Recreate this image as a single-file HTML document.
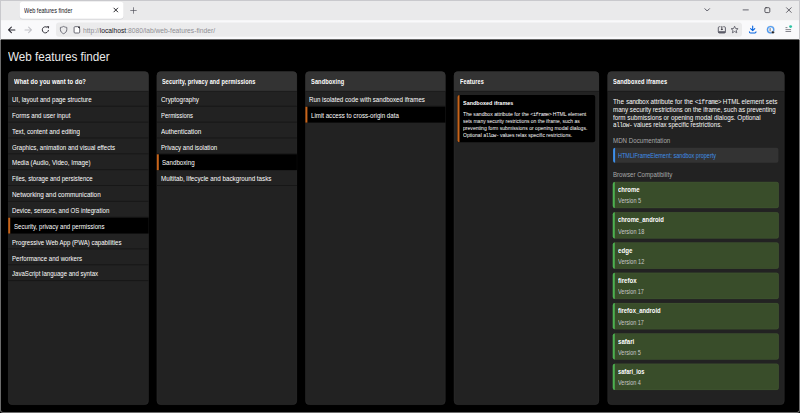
<!DOCTYPE html>
<html><head><meta charset="utf-8"><style>
*{box-sizing:border-box;margin:0;padding:0}
html,body{width:800px;height:413px;overflow:hidden;background:#000;font-family:"Liberation Sans",sans-serif}
.t{position:absolute;white-space:nowrap;line-height:1;transform-origin:0 0}
.bm{display:inline-block;width:0;height:0;vertical-align:baseline}
.m{font-family:"Liberation Mono",monospace;font-size:1em;letter-spacing:-0.55px}
#frame{position:absolute;left:0;top:0;width:800px;height:413px;border:1px solid #6c6c6c;border-top-color:#c9c9cd;border-radius:0 0 3px 3px;pointer-events:none}
#lb{position:absolute;left:0;top:0;width:1px;height:40px;background:#c9c9cd}
#rb{position:absolute;right:0;top:0;width:1px;height:40px;background:#c9c9cd}

</style></head><body>
<svg id="chrome" width="800" height="40" viewBox="0 0 800 40" style="position:absolute;left:0;top:0">
<rect x="0" y="0" width="800" height="21" fill="#eaeaeb"/>
<rect x="0" y="0" width="800" height="1" fill="#c9c9cd"/>
<rect x="19.7" y="2.4" width="103.8" height="17.1" rx="3.2" fill="#d2d2d6"/>
<rect x="19.7" y="1.8" width="103.8" height="16.9" rx="3.2" fill="#fff"/>
<rect x="0" y="20.2" width="800" height="19.2" fill="#f9f9fb"/>
<rect x="56" y="22.4" width="686" height="14.4" rx="3.2" fill="#ebebec"/>
<g fill="none" stroke="#15141a" stroke-width="0.9" stroke-linecap="round">
 <path d="M113.9 8.1L117.7 11.9M117.7 8.1L113.9 11.9"/>
</g>
<g fill="none" stroke-linecap="round">
 <path d="M133.5 7.7V13.3M130.7 10.5H136.3" stroke="#4a4a55" stroke-width="0.65"/>
 <path d="M743.1 9.9H748.3" stroke="#3a3a44" stroke-width="0.75"/>
 <rect x="764.9" y="7.7" width="4.9" height="4.9" rx="1.1" stroke="#2b2a33" stroke-width="0.75"/>
 <path d="M786.5 7.7L791.2 12.4M791.2 7.7L786.5 12.4" stroke="#2b2a33" stroke-width="0.7"/>
</g>
<path d="M704.9 8.7L707.2 11L709.5 8.7" fill="none" stroke="#5b5b66" stroke-width="1" stroke-linecap="round" stroke-linejoin="round"/>
<g fill="none" stroke-width="1.05" stroke-linecap="round" stroke-linejoin="round">
 <path d="M14.9 29.9H8.6M11.4 27.1L8.5 29.9L11.4 32.7" stroke="#2b2a33"/>
 <path d="M25 29.9H31.4M28.6 27.1L31.5 29.9L28.6 32.7" stroke="#c2c2c8"/>
 <path d="M48.45 30.34A3.1 3.1 0 1 1 46.95 27.12" stroke="#2b2a33" stroke-width="0.95"/>
</g>
<path d="M46.6 26.3L49.1 26.2L48.9 28.7Z" fill="#2b2a33"/>
<path d="M63.6 26.4C62.1 27.2 60.8 27.4 60.4 27.4V29.6C60.4 31.7 62 33.1 63.6 33.7C65.2 33.1 66.8 31.7 66.8 29.6V27.4C66.4 27.4 65.1 27.2 63.6 26.4Z" fill="none" stroke="#5b5b66" stroke-width="0.85"/>
<path d="M74.1 27.6Q74.1 26.7 75 26.7H77.7L79.7 28.7V32.1Q79.7 33 78.8 33H75Q74.1 33 74.1 32.1Z" fill="#fff" stroke="#5b5b66" stroke-width="0.9"/>
<path d="M77.6 26.6L79.8 28.8L79.8 26.6Z" fill="#15141a"/>
<path d="M720.4 26.7H719.4Q718.3 26.7 718.3 27.8V31.9Q718.3 33 719.4 33H724.3Q725.4 33 725.4 31.9V27.8Q725.4 26.7 724.3 26.7H723.3" fill="none" stroke="#5b5b66" stroke-width="0.95"/>
<rect x="718.3" y="31.2" width="7.1" height="1.8" fill="#5b5b66"/>
<path d="M721.85 26.2V29.6" stroke="#2b2a33" stroke-width="0.9"/>
<path d="M720.6 28.9L721.85 30.3L723.1 28.9Z" fill="#2b2a33"/>
<path d="M734.6 26.2L735.6 28.5L738.1 28.7L736.2 30.3L736.8 32.8L734.6 31.5L732.4 32.8L733 30.3L731.1 28.7L733.6 28.5Z" fill="none" stroke="#5b5b66" stroke-width="0.85" stroke-linejoin="round"/>
<path d="M752.7 26.1V30.6M750.6 28.6L752.7 30.7L754.8 28.6M749.4 31.8Q749.4 32.9 750.5 32.9H754.9Q756 32.9 756 31.8" fill="none" stroke="#0061e0" stroke-width="1.05" stroke-linecap="round" stroke-linejoin="round"/>
<circle cx="770.6" cy="29.7" r="3.9" fill="none" stroke="#c8c0b8" stroke-width="0.4"/>
<circle cx="770.6" cy="29.7" r="3.1" fill="none" stroke="#4d9af2" stroke-width="1.3"/>
<path d="M770.1 28.1V31.3" stroke="#4a4a55" stroke-width="0.8"/>
<circle cx="772.9" cy="32.3" r="1.35" fill="#15141a" stroke="#f9f9fb" stroke-width="0.4"/>
<path d="M785.5 27.6H787.4M785.5 29.6H791.1M785.5 31.5H791.1" stroke="#55555f" stroke-width="0.7"/>
<circle cx="790.6" cy="26.6" r="1.45" fill="#2ac3a2"/>
</svg>
<svg id="deco" width="800" height="413" viewBox="0 0 800 413" style="position:absolute;left:0;top:0">
<rect x="8.2" y="71.6" width="140.4" height="333.20000000000005" rx="4" fill="#222"/>
<rect x="8.45" y="71.85" width="139.90" height="332.70" rx="3.75" fill="none" stroke="#2c2c2c" stroke-width="0.5"/>
<rect x="8.2" y="105.75" width="140.4" height="1" fill="#171717"/>
<rect x="8.2" y="121.60" width="140.4" height="1" fill="#171717"/>
<rect x="8.2" y="137.45" width="140.4" height="1" fill="#171717"/>
<rect x="8.2" y="153.30" width="140.4" height="1" fill="#171717"/>
<rect x="8.2" y="169.15" width="140.4" height="1" fill="#171717"/>
<rect x="8.2" y="185.00" width="140.4" height="1" fill="#171717"/>
<rect x="8.2" y="200.85" width="140.4" height="1" fill="#171717"/>
<rect x="8.2" y="216.70" width="140.4" height="1" fill="#171717"/>
<rect x="8.2" y="217.70" width="140.4" height="15.85" fill="#000"/>
<rect x="8.2" y="217.70" width="2" height="15.85" fill="#c8641a"/>
<rect x="8.2" y="248.40" width="140.4" height="1" fill="#171717"/>
<rect x="8.2" y="264.25" width="140.4" height="1" fill="#171717"/>
<rect x="8.2" y="280.10" width="140.4" height="1" fill="#171717"/>
<path d="M8.2 90.89999999999999V75.6Q8.2 71.6 12.2 71.6H144.60Q148.60 71.6 148.60 75.6V90.90Z" fill="#333"/>
<rect x="8.2" y="90.90" width="140.4" height="0.9" fill="#1c1c1c"/>
<rect x="156.8" y="71.6" width="140.1" height="333.20000000000005" rx="4" fill="#222"/>
<rect x="157.05" y="71.85" width="139.60" height="332.70" rx="3.75" fill="none" stroke="#2c2c2c" stroke-width="0.5"/>
<rect x="156.8" y="105.75" width="140.1" height="1" fill="#171717"/>
<rect x="156.8" y="121.60" width="140.1" height="1" fill="#171717"/>
<rect x="156.8" y="137.45" width="140.1" height="1" fill="#171717"/>
<rect x="156.8" y="153.30" width="140.1" height="1" fill="#171717"/>
<rect x="156.8" y="154.30" width="140.1" height="15.85" fill="#000"/>
<rect x="156.8" y="154.30" width="2" height="15.85" fill="#c8641a"/>
<rect x="156.8" y="185.00" width="140.1" height="1" fill="#171717"/>
<path d="M156.8 90.89999999999999V75.6Q156.8 71.6 160.8 71.6H292.90Q296.90 71.6 296.90 75.6V90.90Z" fill="#333"/>
<rect x="156.8" y="90.90" width="140.1" height="0.9" fill="#1c1c1c"/>
<rect x="305.4" y="71.6" width="140" height="333.20000000000005" rx="4" fill="#222"/>
<rect x="305.65" y="71.85" width="139.50" height="332.70" rx="3.75" fill="none" stroke="#2c2c2c" stroke-width="0.5"/>
<rect x="305.4" y="105.75" width="140" height="1" fill="#171717"/>
<rect x="305.4" y="106.75" width="140" height="15.85" fill="#000"/>
<rect x="305.4" y="106.75" width="2" height="15.85" fill="#c8641a"/>
<path d="M305.4 90.89999999999999V75.6Q305.4 71.6 309.4 71.6H441.40Q445.40 71.6 445.40 75.6V90.90Z" fill="#333"/>
<rect x="305.4" y="90.90" width="140" height="0.9" fill="#1c1c1c"/>
<rect x="453.9" y="71.6" width="145.1" height="333.20000000000005" rx="4" fill="#222"/>
<rect x="454.15" y="71.85" width="144.60" height="332.70" rx="3.75" fill="none" stroke="#2c2c2c" stroke-width="0.5"/>
<path d="M453.9 90.89999999999999V75.6Q453.9 71.6 457.9 71.6H595.00Q599.00 71.6 599.00 75.6V90.90Z" fill="#333"/>
<rect x="453.9" y="90.90" width="145.1" height="0.9" fill="#1c1c1c"/>
<rect x="607.6" y="71.6" width="176.8" height="333.20000000000005" rx="4" fill="#222"/>
<rect x="607.85" y="71.85" width="176.30" height="332.70" rx="3.75" fill="none" stroke="#2c2c2c" stroke-width="0.5"/>
<path d="M607.6 90.89999999999999V75.6Q607.6 71.6 611.6 71.6H780.40Q784.40 71.6 784.40 75.6V90.90Z" fill="#333"/>
<rect x="607.6" y="90.90" width="176.8" height="0.9" fill="#1c1c1c"/>
<rect x="457.5" y="94.9" width="137.7" height="47.4" rx="2" fill="#000"/>
<path d="M459.5 94.9H459.5Q457.5 94.9 457.5 96.9V140.30Q457.5 142.30 459.5 142.30H459.5Z" fill="#c8641a"/>
<rect x="613.1" y="147.85" width="165.3" height="14.95" rx="2" fill="#333"/>
<path d="M615.1 147.85H615.1Q613.1 147.85 613.1 149.85V160.80Q613.1 162.80 615.1 162.80H615.1Z" fill="#3d8fea"/>
<rect x="612.8" y="181.9" width="165.95" height="26.2" rx="2" fill="#394d2a"/>
<rect x="613.05" y="182.15" width="165.45" height="25.70" rx="2" fill="none" stroke="#435633" stroke-width="0.5"/>
<path d="M614.8 181.9H614.8Q612.8 181.9 612.8 183.9V206.10Q612.8 208.10 614.8 208.10H614.8Z" fill="#4caf50"/>
<rect x="612.8" y="212.2" width="165.95" height="26.2" rx="2" fill="#394d2a"/>
<rect x="613.05" y="212.45" width="165.45" height="25.70" rx="2" fill="none" stroke="#435633" stroke-width="0.5"/>
<path d="M614.8 212.2H614.8Q612.8 212.2 612.8 214.2V236.40Q612.8 238.40 614.8 238.40H614.8Z" fill="#4caf50"/>
<rect x="612.8" y="242.5" width="165.95" height="26.2" rx="2" fill="#394d2a"/>
<rect x="613.05" y="242.75" width="165.45" height="25.70" rx="2" fill="none" stroke="#435633" stroke-width="0.5"/>
<path d="M614.8 242.5H614.8Q612.8 242.5 612.8 244.5V266.70Q612.8 268.70 614.8 268.70H614.8Z" fill="#4caf50"/>
<rect x="612.8" y="272.8" width="165.95" height="26.2" rx="2" fill="#394d2a"/>
<rect x="613.05" y="273.05" width="165.45" height="25.70" rx="2" fill="none" stroke="#435633" stroke-width="0.5"/>
<path d="M614.8 272.8H614.8Q612.8 272.8 612.8 274.8V297.00Q612.8 299.00 614.8 299.00H614.8Z" fill="#4caf50"/>
<rect x="612.8" y="303.1" width="165.95" height="26.2" rx="2" fill="#394d2a"/>
<rect x="613.05" y="303.35" width="165.45" height="25.70" rx="2" fill="none" stroke="#435633" stroke-width="0.5"/>
<path d="M614.8 303.1H614.8Q612.8 303.1 612.8 305.1V327.30Q612.8 329.30 614.8 329.30H614.8Z" fill="#4caf50"/>
<rect x="612.8" y="333.4" width="165.95" height="26.2" rx="2" fill="#394d2a"/>
<rect x="613.05" y="333.65" width="165.45" height="25.70" rx="2" fill="none" stroke="#435633" stroke-width="0.5"/>
<path d="M614.8 333.4H614.8Q612.8 333.4 612.8 335.4V357.60Q612.8 359.60 614.8 359.60H614.8Z" fill="#4caf50"/>
<rect x="612.8" y="363.7" width="165.95" height="26.2" rx="2" fill="#394d2a"/>
<rect x="613.05" y="363.95" width="165.45" height="25.70" rx="2" fill="none" stroke="#435633" stroke-width="0.5"/>
<path d="M614.8 363.7H614.8Q612.8 363.7 612.8 365.7V387.90Q612.8 389.90 614.8 389.90H614.8Z" fill="#4caf50"/>
</svg>

<div class="t" style="left:23.75px;font-size:6.5px;font-weight:normal;color:#15141a;top:7.60px;transform:scaleX(0.8541);">Web features finder</div>
<div class="t" style="left:83.20px;font-size:6.9px;font-weight:normal;color:#15141a;top:27.50px;transform:scaleX(0.9706);"><span style="color:#8f8f94">http://</span>localhost<span style="color:#8f8f94">:8080/lab/web-features-finder/</span></div>
<div class="t" style="left:7.80px;font-size:12.8px;font-weight:normal;color:#eaeaea;top:50.50px;transform:scaleX(0.9125);">Web features finder</div>
<div class="t" style="left:14.00px;font-size:6.6px;font-weight:bold;color:#ffffff;letter-spacing:0.12px;top:79.10px;transform:scaleX(0.8873);">What do you want to do?</div>
<div class="t" style="left:162.40px;font-size:6.6px;font-weight:bold;color:#ffffff;letter-spacing:0.12px;top:79.10px;transform:scaleX(0.8463);">Security, privacy and permissions</div>
<div class="t" style="left:310.60px;font-size:6.6px;font-weight:bold;color:#ffffff;letter-spacing:0.12px;top:79.00px;transform:scaleX(0.8578);">Sandboxing</div>
<div class="t" style="left:459.65px;font-size:6.6px;font-weight:bold;color:#ffffff;letter-spacing:0.12px;top:79.00px;transform:scaleX(0.8382);">Features</div>
<div class="t" style="left:612.80px;font-size:6.6px;font-weight:bold;color:#ffffff;letter-spacing:0.12px;top:79.00px;transform:scaleX(0.8620);">Sandboxed iframes</div>
<div class="t" style="left:12.10px;font-size:7.0px;font-weight:normal;color:#ffffff;top:96.00px;transform:scaleX(0.8855);">UI, layout and page structure</div>
<div class="t" style="left:12.10px;font-size:7.0px;font-weight:normal;color:#ffffff;top:111.85px;transform:scaleX(0.8828);">Forms and user input</div>
<div class="t" style="left:12.10px;font-size:7.0px;font-weight:normal;color:#ffffff;top:127.70px;transform:scaleX(0.8947);">Text, content and editing</div>
<div class="t" style="left:12.10px;font-size:7.0px;font-weight:normal;color:#ffffff;top:143.55px;transform:scaleX(0.8717);">Graphics, animation and visual effects</div>
<div class="t" style="left:12.10px;font-size:7.0px;font-weight:normal;color:#ffffff;top:159.40px;transform:scaleX(0.8861);">Media (Audio, Video, Image)</div>
<div class="t" style="left:12.10px;font-size:7.0px;font-weight:normal;color:#ffffff;top:175.25px;transform:scaleX(0.8641);">Files, storage and persistence</div>
<div class="t" style="left:12.10px;font-size:7.0px;font-weight:normal;color:#ffffff;top:191.10px;transform:scaleX(0.9081);">Networking and communication</div>
<div class="t" style="left:12.10px;font-size:7.0px;font-weight:normal;color:#ffffff;top:206.95px;transform:scaleX(0.8683);">Device, sensors, and OS integration</div>
<div class="t" style="left:13.50px;font-size:7.0px;font-weight:normal;color:#ffffff;top:222.80px;transform:scaleX(0.8723);">Security, privacy and permissions</div>
<div class="t" style="left:12.10px;font-size:7.0px;font-weight:normal;color:#ffffff;top:238.65px;transform:scaleX(0.8686);">Progressive Web App (PWA) capabilities</div>
<div class="t" style="left:12.10px;font-size:7.0px;font-weight:normal;color:#ffffff;top:254.50px;transform:scaleX(0.8745);">Performance and workers</div>
<div class="t" style="left:12.10px;font-size:7.0px;font-weight:normal;color:#ffffff;top:270.35px;transform:scaleX(0.8676);">JavaScript language and syntax</div>
<div class="t" style="left:160.65px;font-size:7.0px;font-weight:normal;color:#ffffff;top:96.00px;transform:scaleX(0.9029);">Cryptography</div>
<div class="t" style="left:160.65px;font-size:7.0px;font-weight:normal;color:#ffffff;top:111.85px;transform:scaleX(0.8407);">Permissions</div>
<div class="t" style="left:160.65px;font-size:7.0px;font-weight:normal;color:#ffffff;top:127.70px;transform:scaleX(0.9070);">Authentication</div>
<div class="t" style="left:160.65px;font-size:7.0px;font-weight:normal;color:#ffffff;top:143.55px;transform:scaleX(0.8761);">Privacy and isolation</div>
<div class="t" style="left:161.80px;font-size:7.0px;font-weight:normal;color:#ffffff;top:159.40px;transform:scaleX(0.8815);">Sandboxing</div>
<div class="t" style="left:160.65px;font-size:7.0px;font-weight:normal;color:#ffffff;top:175.25px;transform:scaleX(0.8926);">Multitab, lifecycle and background tasks</div>
<div class="t" style="left:309.00px;font-size:7.0px;font-weight:normal;color:#ffffff;top:96.00px;transform:scaleX(0.8812);">Run isolated code with sandboxed iframes</div>
<div class="t" style="left:310.80px;font-size:7.0px;font-weight:normal;color:#ffffff;top:111.85px;transform:scaleX(0.8781);">Limit access to cross-origin data</div>
<div class="t" style="left:462.80px;font-size:5.9px;font-weight:bold;color:#ffffff;top:100.75px;transform:scaleX(0.9256);">Sandboxed iframes</div>
<div class="t" style="left:462.90px;font-size:5.9px;font-weight:normal;color:#ffffff;top:112.00px;transform:scaleX(0.8751);">The sandbox attribute for the <span class="m">&lt;iframe&gt;</span> HTML element</div>
<div class="t" style="left:462.90px;font-size:5.9px;font-weight:normal;color:#ffffff;top:119.20px;transform:scaleX(0.8427);">sets many security restrictions on the iframe, such as</div>
<div class="t" style="left:462.90px;font-size:5.9px;font-weight:normal;color:#ffffff;top:125.90px;transform:scaleX(0.8634);">preventing form submissions or opening modal dialogs.</div>
<div class="t" style="left:462.90px;font-size:5.9px;font-weight:normal;color:#ffffff;top:132.50px;transform:scaleX(0.8550);">Optional <span class="m">allow-</span> values relax specific restrictions.</div>
<div class="t" style="left:613.30px;font-size:6.8px;font-weight:normal;color:#f6f6f6;top:98.80px;transform:scaleX(0.9312);">The <span class="m">sandbox</span> attribute for the <span class="m">&lt;iframe&gt;</span> HTML element sets</div>
<div class="t" style="left:613.30px;font-size:6.8px;font-weight:normal;color:#f6f6f6;top:106.90px;transform:scaleX(0.9086);">many security restrictions on the iframe, such as preventing</div>
<div class="t" style="left:613.30px;font-size:6.8px;font-weight:normal;color:#f6f6f6;top:114.60px;transform:scaleX(0.9242);">form submissions or opening modal dialogs. Optional</div>
<div class="t" style="left:613.30px;font-size:6.8px;font-weight:normal;color:#f6f6f6;top:122.20px;transform:scaleX(0.9038);"><span class="m">allow-</span> values relax specific restrictions.</div>
<div class="t" style="left:613.30px;font-size:6.7px;font-weight:normal;color:#a9a9a9;top:137.80px;transform:scaleX(0.9230);">MDN Documentation</div>
<div class="t" style="left:618.00px;font-size:6.5px;font-weight:normal;color:#3f8fe8;top:152.80px;transform:scaleX(0.8451);">HTMLIFrameElement: sandbox property</div>
<div class="t" style="left:613.30px;font-size:6.7px;font-weight:normal;color:#a9a9a9;top:171.80px;transform:scaleX(0.9154);">Browser Compatibility</div>
<div class="t" style="left:618.20px;font-size:6.8px;font-weight:bold;color:#ffffff;top:187.00px;transform:scaleX(0.8774);">chrome</div>
<div class="t" style="left:618.20px;font-size:6.5px;font-weight:normal;color:#c9c9c9;top:198.40px;transform:scaleX(0.8558);">Version 5</div>
<div class="t" style="left:618.20px;font-size:6.8px;font-weight:bold;color:#ffffff;top:217.30px;transform:scaleX(0.8598);">chrome_android</div>
<div class="t" style="left:618.20px;font-size:6.5px;font-weight:normal;color:#c9c9c9;top:228.70px;transform:scaleX(0.8562);">Version 18</div>
<div class="t" style="left:618.20px;font-size:6.8px;font-weight:bold;color:#ffffff;top:247.60px;transform:scaleX(0.9008);">edge</div>
<div class="t" style="left:618.20px;font-size:6.5px;font-weight:normal;color:#c9c9c9;top:259.00px;transform:scaleX(0.8562);">Version 12</div>
<div class="t" style="left:618.20px;font-size:6.8px;font-weight:bold;color:#ffffff;top:277.90px;transform:scaleX(0.8902);">firefox</div>
<div class="t" style="left:618.20px;font-size:6.5px;font-weight:normal;color:#c9c9c9;top:289.30px;transform:scaleX(0.8399);">Version 17</div>
<div class="t" style="left:618.20px;font-size:6.8px;font-weight:bold;color:#ffffff;top:308.20px;transform:scaleX(0.8609);">firefox_android</div>
<div class="t" style="left:618.20px;font-size:6.5px;font-weight:normal;color:#c9c9c9;top:319.60px;transform:scaleX(0.8399);">Version 17</div>
<div class="t" style="left:618.20px;font-size:6.8px;font-weight:bold;color:#ffffff;top:338.50px;transform:scaleX(0.8930);">safari</div>
<div class="t" style="left:618.20px;font-size:6.5px;font-weight:normal;color:#c9c9c9;top:349.90px;transform:scaleX(0.8410);">Version 5</div>
<div class="t" style="left:618.20px;font-size:6.8px;font-weight:bold;color:#ffffff;top:368.80px;transform:scaleX(0.8315);">safari_ios</div>
<div class="t" style="left:618.20px;font-size:6.5px;font-weight:normal;color:#c9c9c9;top:380.20px;transform:scaleX(0.8410);">Version 4</div>
<div id="frame"></div><div id="lb"></div><div id="rb"></div>
</body></html>
